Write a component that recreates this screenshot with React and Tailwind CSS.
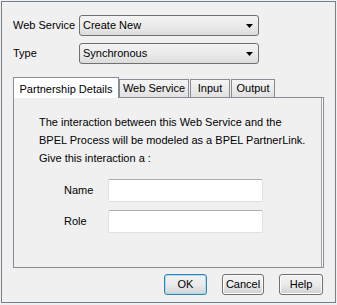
import React from "react";

const font = { fontFamily: '"Liberation Sans", Arial, sans-serif' };

function Select({ value }) {
  return (
    <div className="flex h-[21px] w-[180px] items-center justify-between rounded-[3px] border border-[#707070] bg-gradient-to-b from-[#f3f3f3] via-[#ebebeb] to-[#dcdcdc] pl-[3px] pr-[5px] text-[11px] text-black">
      <span>{value}</span>
      <svg width="7" height="4" viewBox="0 0 7 4">
        <polygon points="0,0 7,0 3.5,4" fill="#000" />
      </svg>
    </div>
  );
}

function Tab({ label, w, selected }) {
  if (selected) {
    return (
      <div
        className={`relative z-10 -mb-px flex h-[21px] items-start justify-center border border-b-0 border-[#898c95] bg-white pt-[3px] text-[11px] text-black ${w}`}
      >
        {label}
      </div>
    );
  }
  return (
    <div
      className={`flex h-[18px] items-center justify-center border border-b-0 border-[#898c95] bg-gradient-to-b from-[#f5f5f5] to-[#e1e1e1] text-[11px] text-black ${w}`}
    >
      {label}
    </div>
  );
}

function Input() {
  return (
    <div className="h-[23px] w-[155px] rounded-[2px] border border-[#dde1e7] border-t-[#abadb3] bg-white" />
  );
}

function Button({ label, w, focused }) {
  return (
    <div
      className={`flex h-[21px] items-center justify-center rounded-[3px] border text-[11px] text-black ${w} ${
        focused
          ? "border-[#3c7fb1] bg-gradient-to-b from-[#f2f2f2] via-[#ebebeb] to-[#d4d4d4] shadow-[inset_0_0_0_1px_#9fdcf7]"
          : "border-[#707070] bg-gradient-to-b from-[#f2f2f2] via-[#ebebeb] to-[#cfcfcf] shadow-[inset_0_0_0_1px_#fcfcfc]"
      }`}
    >
      {label}
    </div>
  );
}

export default function App() {
  return (
    <div className="h-[305px] w-[337px] bg-[#f0f0f0] p-px" style={font}>
      <div className="flex h-[302px] w-[335px] flex-col border border-[#76808c] px-[11px] pt-[13px]">
        <div className="flex items-center">
          <div className="w-[66px] text-[11px] text-black">Web Service</div>
          <Select value="Create New" />
        </div>
        <div className="mt-[7px] flex items-center">
          <div className="w-[66px] text-[11px] text-black">Type</div>
          <Select value="Synchronous" />
        </div>

        <div className="mt-[13px] flex h-[20px] items-end">
          <Tab label="Partnership Details" w="w-[106px]" selected />
          <Tab label="Web Service" w="w-[70px]" />
          <div className="w-px" />
          <Tab label="Input" w="w-[40px]" />
          <div className="w-px" />
          <Tab label="Output" w="w-[44px]" />
        </div>

        <div className="h-[171px] border border-[#898c95] bg-[#f0f0f0] pl-[25px] pt-[15px] shadow-[inset_-1px_0_0_#ffffff,inset_-2px_0_0_#a0a0a0]">
          <p className="text-[11px] leading-[18px] text-black">
            The interaction between this Web Service and the
            <br />
            BPEL Process will be modeled as a BPEL PartnerLink.
            <br />
            Give this interaction a :
          </p>
          <div className="mt-[12px] flex items-center pl-[25px]">
            <div className="w-[44px] text-[11px] text-black">Name</div>
            <Input />
          </div>
          <div className="mt-[8px] flex items-center pl-[25px]">
            <div className="w-[44px] text-[11px] text-black">Role</div>
            <Input />
          </div>
        </div>

        <div className="mt-[6px] flex justify-end gap-[15px] pr-px">
          <Button label="OK" w="w-[43px]" focused />
          <Button label="Cancel" w="w-[42px]" />
          <Button label="Help" w="w-[44px]" />
        </div>
      </div>
    </div>
  );
}
